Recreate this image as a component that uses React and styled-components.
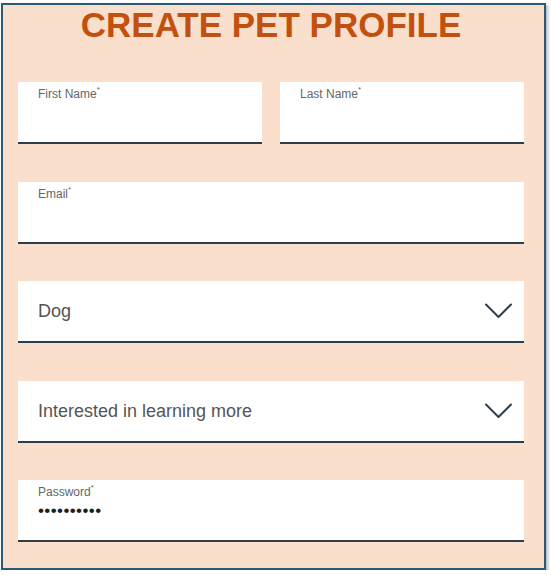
import React from "react";
import styled, { createGlobalStyle } from "styled-components";

const Global = createGlobalStyle`
  html, body { margin: 0; padding: 0; background: #ffffff; }
  * { box-sizing: border-box; }
`;

const Frame = styled.div`
  margin: 3px 0 0 1px;
  width: 545px;
  height: 567px;
  background: #fadfcc;
  border: 2px solid #2a5b76;
  box-shadow: 2px 2px 3px rgba(0, 0, 0, 0.28);
  padding: 3px 20px 0 15px;
  display: flex;
  flex-direction: column;
  font-family: "Liberation Sans", Arial, sans-serif;
`;

const Title = styled.h1`
  margin: 0;
  font-size: 35px;
  line-height: 34px;
  font-weight: 700;
  color: #c2500e;
  text-align: center;
  letter-spacing: 0;
`;

const Fields = styled.div`
  margin-top: 40px;
  display: flex;
  flex-direction: column;
  gap: 37.5px;
`;

const Field = styled.div`
  flex: none;
  height: 62px;
  background: #ffffff;
  border-bottom: 2px solid #2d3d4c;
  display: flex;
  flex-direction: column;
  justify-content: ${(p) => (p.$center ? "center" : "flex-start")};
  padding: ${(p) => (p.$center ? "0 12px 0 20px" : "5px 12px 0 20px")};
`;

const Row = styled.div`
  display: flex;
  gap: 18px;
  & > ${Field} {
    flex: 1 1 0;
  }
`;

const Label = styled.div`
  font-size: 12px;
  color: #666666;
  line-height: 14px;
  sup {
    font-size: 8px;
    vertical-align: top;
    line-height: 8px;
    position: relative;
    top: -1px;
  }
`;

const Value = styled.div`
  font-size: 18px;
  color: #555555;
  line-height: 20px;
`;

const Dots = styled.div`
  font-size: 17px;
  color: #1e1e1e;
  line-height: 14px;
  margin-top: 5px;
  letter-spacing: 0.4px;
`;

const SelectInner = styled.div`
  display: flex;
  align-items: center;
  justify-content: space-between;
`;

const Chevron = () => (
  <svg width="27" height="16" viewBox="0 0 27 16" fill="none">
    <polyline
      points="1,1.5 13.5,14 26,1.5"
      stroke="#2d3d4c"
      strokeWidth="2"
      strokeLinecap="round"
      strokeLinejoin="round"
    />
  </svg>
);

const Req = ({ children }) => (
  <Label>
    {children}
    <sup>*</sup>
  </Label>
);

export default function App() {
  return (
    <>
      <Global />
      <Frame>
        <Title>CREATE PET PROFILE</Title>
        <Fields>
          <Row>
            <Field>
              <Req>First Name</Req>
            </Field>
            <Field>
              <Req>Last Name</Req>
            </Field>
          </Row>
          <Field>
            <Req>Email</Req>
          </Field>
          <Field $center>
            <SelectInner>
              <Value>Dog</Value>
              <Chevron />
            </SelectInner>
          </Field>
          <Field $center>
            <SelectInner>
              <Value>Interested in learning more</Value>
              <Chevron />
            </SelectInner>
          </Field>
          <Field>
            <Req>Password</Req>
            <Dots>••••••••••</Dots>
          </Field>
        </Fields>
      </Frame>
    </>
  );
}
